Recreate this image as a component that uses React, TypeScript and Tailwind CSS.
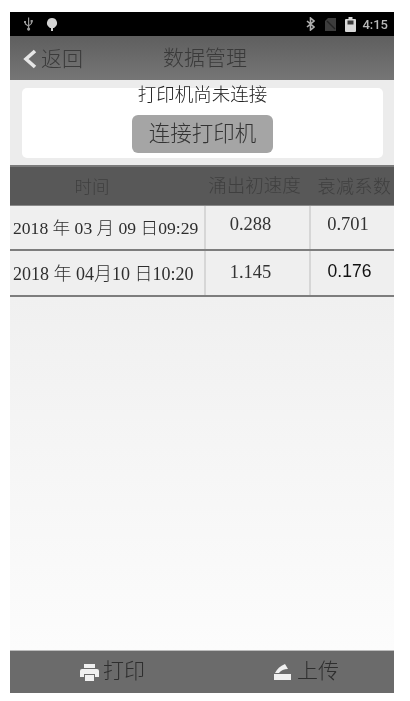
const cjk = "font-['Liberation_Serif','Noto_Sans_CJK_SC',serif]"

function StatusBar() {
  return (
    <div className="flex h-[24px] items-center justify-between bg-black pl-[13px] pr-[6px]">
      <div className="flex items-center gap-[12px]">
        <svg width="11" height="14" viewBox="0 0 11 14" fill="#9a9a9a">
          <path d="M5 0.5h1.2v13H5z" />
          <path d="M1 4h2v2.4l2.4 2v1.4L1.8 7.2V6H1zM7.6 3h2.2v2.6h-0.8v1.2L6 9.3V8l2-1.8V5.6h-0.400z" />
          <circle cx="5.600" cy="12" r="1.600" />
        </svg>
        <svg width="12" height="15" viewBox="0 0 12 15" fill="#d4d4d4">
          <path d="M6 1a5 5 0 0 1 3.400 8.700L8 11H4L2.600 9.700A5 5 0 0 1 6 1z" />
          <path d="M5 11h2v3H5z" />
        </svg>
      </div>
      <div className="flex items-center">
        <svg width="9" height="14" viewBox="0 0 9 14" fill="none" stroke="#b0b0b0" strokeWidth="1.6">
          <path d="M1 4l7 6-3.500 3V1L8 4l-7 6" />
        </svg>
        <svg className="ml-[10px]" width="11" height="13" viewBox="0 0 11 13" fill="#3c3c3c">
          <path d="M0 13V3l3-3h8v13z" />
          <path d="M2 3l8 8" stroke="#222" strokeWidth="1.4" />
        </svg>
        <svg className="ml-[9px]" width="11" height="15" viewBox="0 0 11 15" fill="#d8d8d8">
          <path d="M3.500 0h4v2H10a1 1 0 0 1 1 1v11a1 1 0 0 1-1 1H1a1 1 0 0 1-1-1V3a1 1 0 0 1 1-1h2.500z" />
          <path d="M2.500 3.500h6v4h-6z" fill="#3a3a3a" />
        </svg>
        <span className="ml-[6px] font-['Roboto',sans-serif] text-[13px] font-medium leading-none text-[#b8b8b8]">4:15</span>
      </div>
    </div>
  )
}

function NavBar() {
  return (
    <div className={`relative flex h-[44px] items-center justify-center bg-gradient-to-b from-[#5f5f5f] to-[#767676] pt-[2px] ${cjk}`}>
      <div className="absolute left-[11px] top-[10px] flex items-center">
        <svg width="18" height="22" viewBox="0 0 18 22" fill="none" stroke="#e6e6e6" strokeWidth="3.6">
          <path d="M14 3L5 11l9 8" />
        </svg>
        <span className="ml-[2px] text-[21px] font-light leading-[26px] text-[#3b3b3b]">返回</span>
      </div>
      <span className="ml-[6px] text-[21px] font-light text-[#3a3a3a]">数据管理</span>
    </div>
  )
}

function PrinterPanel() {
  return (
    <div className="bg-[#ececec] pb-[7px] pl-[12px] pr-[11px] pt-[8px]">
      <div className="flex h-[70px] flex-col items-center rounded-[5px] bg-white">
        <span className={`text-[18.5px] font-light leading-[14px] text-[#222] ${cjk}`}>打印机尚未连接</span>
        <button className={`mt-[13px] flex h-[38px] w-[141px] items-center justify-center rounded-[6px] bg-[#a5a5a5] text-[21.5px] font-light text-[#333] ${cjk}`}>
          连接打印机
        </button>
      </div>
    </div>
  )
}

function DataTable() {
  return (
    <div className={cjk}>
      <div className="grid h-[41px] grid-cols-[194px_105px_85px] items-center border-t-2 border-b border-t-[#7c7c7c] border-b-[#8a8a8a] bg-[#585858] pt-[2px] font-light text-[#3f3f3f]">
        <span className="pr-[30px] text-center text-[17.5px]">时间</span>
        <span className="pr-[4px] text-center text-[18.5px]">涌出初速度</span>
        <span className="pl-[6px] text-center text-[18px] tracking-[0.5px]">衰减系数</span>
      </div>
      <div className="grid h-[45px] grid-cols-[194px_105px_85px] border-b-2 border-b-[#7d7d7d] bg-[#efefef]">
        <span className="flex items-center whitespace-nowrap pl-[3px] pt-[2px] text-[17.6px] font-light text-[#2e2e2e]">2018 年 03 月 09 日09:29</span>
        <span className="flex items-center justify-center border-l-2 border-l-[#d6d6d6] pb-[5px] pr-[14px] text-[18.5px] text-[#333]">0.288</span>
        <span className="flex items-center justify-center border-l-2 border-l-[#d6d6d6] pb-[5px] pr-[9px] text-[18.5px] text-[#333]">0.701</span>
      </div>
      <div className="grid h-[46px] grid-cols-[194px_105px_85px] border-b-2 border-b-[#7d7d7d] bg-[#efefef]">
        <span className="flex items-center whitespace-nowrap pl-[3px] pt-[2px] text-[18px] font-light text-[#2e2e2e]">2018 年 04月10 日10:20</span>
        <span className="flex items-center justify-center border-l-2 border-l-[#d6d6d6] pr-[14px] text-[18.5px] text-[#333]">1.145</span>
        <span className="flex items-center justify-center border-l-2 border-l-[#d6d6d6] pb-[4px] pr-[6px] font-['Liberation_Sans',sans-serif] text-[17.5px] text-[#111]">0.176</span>
      </div>
    </div>
  )
}

function BottomBar() {
  return (
    <div className={`grid h-[43px] grid-cols-2 border-t border-t-[#bdbdbd] bg-[#6b6b6b] text-[21px] font-light text-[#2e2e2e] ${cjk}`}>
      <div className="flex items-center pl-[70px]">
        <svg width="19" height="17" viewBox="0 0 19 17" fill="#f0f0f0">
          <path d="M4 0h11v4H4z" />
          <path d="M2 5h15a2 2 0 0 1 2 2v6h-4v-3H4v3H0V7a2 2 0 0 1 2-2z" />
          <path d="M5 11h9v6H5z" />
        </svg>
        <span className="ml-[4px]">打印</span>
      </div>
      <div className="flex items-center pl-[72px]">
        <svg width="17" height="16" viewBox="0 0 17 16" fill="#f0f0f0">
          <path d="M11 0l3 5c-4 0-7 1.500-9 4H1c2-4 5-7 10-9z" />
          <path d="M0 10h17v6H0z" />
        </svg>
        <span className="ml-[6px]">上传</span>
      </div>
    </div>
  )
}

export default function App() {
  return (
    <div className="h-[701px] w-[410px] overflow-hidden bg-white pb-[8px] pl-[10px] pr-[16px] pt-[12px] blur-[0.5px]">
      <div className="flex h-full flex-col">
        <StatusBar />
        <NavBar />
        <PrinterPanel />
        <DataTable />
        <div className="flex-1 bg-gradient-to-b from-[#f0f0f0] to-[#fcfcfc]" />
        <BottomBar />
      </div>
    </div>
  )
}
